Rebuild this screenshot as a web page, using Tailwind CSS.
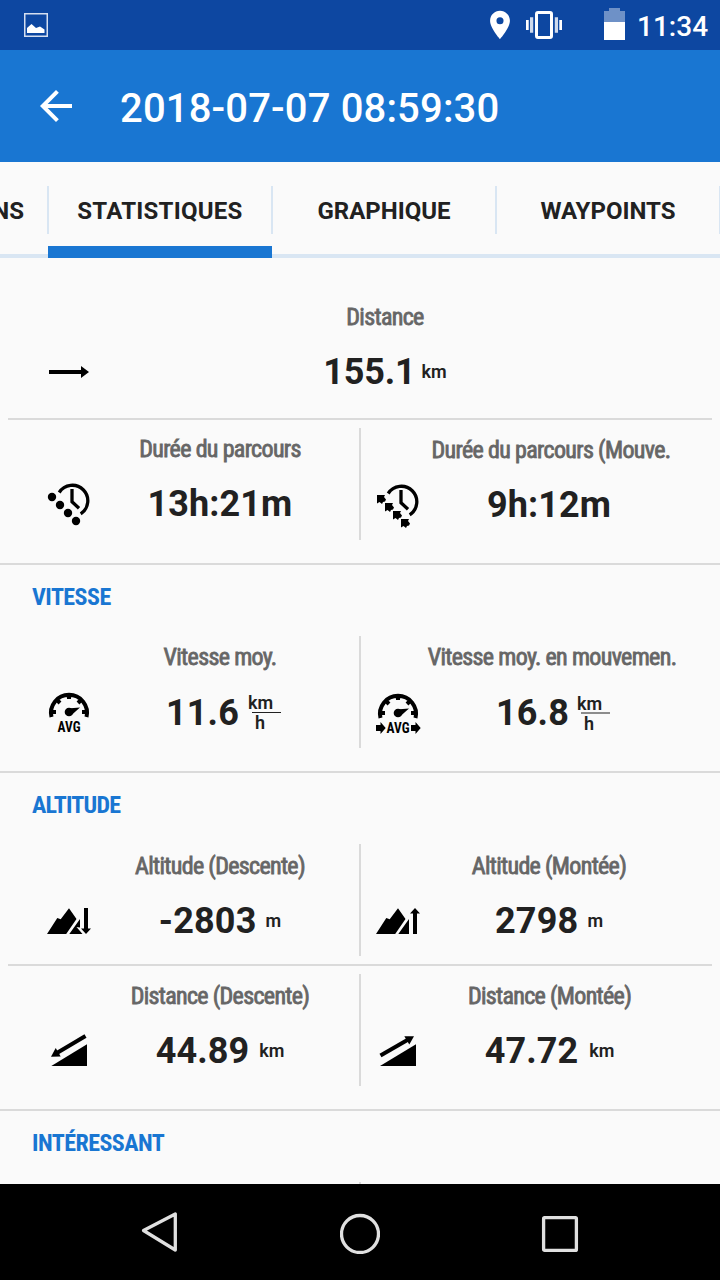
<!DOCTYPE html>
<html lang="fr">
<head>
<meta charset="utf-8">
<title>2018-07-07 08:59:30</title>
<script src="https://cdn.jsdelivr.net/npm/@tailwindcss/browser@4"></script>
</head>
<body class="w-[720px] h-[1280px] overflow-hidden bg-[#fafafa] font-['Roboto',sans-serif] text-[#212121] flex flex-col">

<!-- Status bar -->
<div class="h-[50px] shrink-0 bg-[#0d47a1] flex items-center text-white">
  <svg class="ml-6 w-6 h-6" viewBox="0 0 24 24"><rect x=".75" y=".75" width="22.5" height="22.5" fill="none" stroke="#d5dff0" stroke-width="1.5"/><path d="M3 20v-5l4.5-4 4.5 4 4-1.5 4.5 3V20z" fill="#fff"/></svg>
  <svg class="ml-[435px] w-[34px] h-[34px]" viewBox="0 0 24 24" fill="#fff"><path d="M12 2C8.13 2 5 5.13 5 9c0 5.25 7 13 7 13s7-7.750 7-13c0-3.870-3.130-7-7-7zm0 9.500a2.500 2.500 0 1 1 0-5 2.500 2.500 0 0 1 0 5z"/></svg>
  <svg class="ml-[9px] w-9 h-7" viewBox="0 0 36 28" fill="#fff"><rect x="10.500" y="1.500" width="15" height="25" rx="1.500" fill="none" stroke="#fff" stroke-width="3"/><path d="M0 9h2.700v10H0zM33.300 9H36v10h-2.700z"/><path fill="#cfdaec" d="M4 6.300h3.200v15.400H4zM28.800 6.300H32v15.400h-3.200z"/></svg>
  <svg class="ml-[42px] -mt-[2px] w-[21px] h-8" viewBox="0 0 21 32"><path fill="#6e91c7" d="M5 0h11v3h5v11H0V3h5z"/><path fill="#fff" d="M0 14h21v18H0z"/></svg>
  <span class="ml-[12px] mt-[3px] text-[28px] leading-8 font-medium">11:34</span>
</div>

<!-- App bar -->
<header class="h-[112px] shrink-0 bg-[#1976d2] flex items-center pl-8 text-white">
  <svg class="w-12 h-12" viewBox="0 0 24 24" fill="#fff"><path d="M20 11H7.830l5.590-5.590L12 4l-8 8 8 8 1.410-1.410L7.830 13H20v-2z"/></svg>
  <h1 class="ml-10 mt-[5px] text-[40px] leading-12 font-medium tracking-[0.150px]">2018-07-07 08:59:30</h1>
</header>

<!-- Tabs -->
<nav class="h-24 shrink-0 border-b-4 border-[#d9e6f3] flex text-[24px] leading-[34px] font-bold">
  <div class="w-12 h-24 flex justify-end overflow-hidden pr-6 pt-8 shrink-0"><span>NS</span></div>
  <div class="w-56 h-24 flex flex-col shrink-0 border-b-12 border-[#1976d2]">
    <div class="mt-6 h-12 -mx-px border-x-2 border-[#d9e6f3] text-center pt-2 tracking-[0.250px]">STATISTIQUES</div>
  </div>
  <div class="mt-6 h-12 w-56 shrink-0 pt-2 text-center">GRAPHIQUE</div>
  <div class="mt-6 h-12 w-[226px] shrink-0 -ml-px border-x-2 border-[#d9e6f3] pt-2 text-center">WAYPOINTS</div>
</nav>

<main class="flex-1 min-h-0 overflow-hidden">
  <!-- Distance -->
  <section class="h-[160px] pt-[37px]">
    <div class="flex">
      <svg class="ml-12 mt-[70px] w-[42px] h-3.5" viewBox="0 0 42 14"><path d="M1 5h32V1l8 6-8 6V9H1z"/></svg>
      <div class="w-[590px] text-center">
        <div class="mt-2 leading-7 text-[24px] font-['Roboto_Condensed'] tracking-[-0.660px] text-[#666] [-webkit-text-stroke:0.800px_#666]">Distance</div>
        <div class="mt-5 flex justify-center items-baseline leading-[42px]"><span class="text-[36px] font-bold tracking-[-0.150px]">155.1</span><span class="ml-[6px] relative -top-1.5 text-[18px] font-semibold">km</span></div>
      </div>
    </div>
  </section>
  <div class="h-0.5 mx-2 bg-[#dadada]"></div>

  <!-- Durations -->
  <section class="flex h-[143px] pt-2">
    <div class="w-[359px] h-28 flex pl-[46px]">
      <svg class="mt-[55px] w-[46px] h-[46px] overflow-visible" viewBox="0 0 46 46"><g transform="translate(1 0)"><path d="M12.200 9.500A15.500 15.500 0 1 1 33.700 30.800M25 6v12.700l7 6.600" fill="none" stroke="#000" stroke-width="3.300"/><circle cx="5" cy="14" r="4.200"/><circle cx="13" cy="22" r="4.200"/><circle cx="21" cy="30" r="4.200"/><circle cx="29" cy="38" r="4.200"/></g></svg>
      <div class="w-[256px] text-center">
        <div class="mt-[7px] leading-7 text-[24px] font-['Roboto_Condensed'] tracking-[-0.660px] text-[#666] [-webkit-text-stroke:0.800px_#666]">Durée du parcours</div>
        <div class="mt-5 leading-[42px] text-[36px] font-bold tracking-[0.100px]">13h:21m</div>
      </div>
    </div>
    <div class="w-0.5 h-28 bg-[#dadada]"></div>
    <div class="w-[359px] h-28 flex pl-[14px]">
      <svg class="mt-[55px] w-[46px] h-[46px] overflow-visible" viewBox="0 0 46 46"><g transform="translate(1 1)"><path d="M12.200 9.500A15.500 15.500 0 1 1 33.700 30.800M25 6v12.700l7 6.600" fill="none" stroke="#000" stroke-width="3.300"/><path d="M1 11h8l-1 2 2 2.500-1 2-2 .5-1 2-2.500-2-2.500 1.500zM9 19h8l-1 2 2 2.500-1 2-2 .5-1 2-2.500-2L9 27.500zM17 27h8l-1 2 2 2.500-1 2-2 .5-1 2-2.500-2-2.500 1.500zM25 35h8l-1 2 2 2.500-1 2-2 .5-1 2-2.500-2-2.500 1.500z"/></g></svg>
      <div class="w-[257px] text-center whitespace-nowrap">
        <div class="mt-2 pl-[3px] leading-7 text-[24px] font-['Roboto_Condensed'] tracking-[-0.660px] text-[#666] [-webkit-text-stroke:0.800px_#666]">Durée du parcours (Mouve.</div>
        <div class="mt-5 -ml-px leading-[42px] text-[36px] font-bold tracking-[0.100px]">9h:12m</div>
      </div>
    </div>
  </section>

  <!-- Speed -->
  <div class="h-0.5 bg-[#dadada]"></div>
  <h2 class="h-[71px] pl-8 pt-[18px] text-[24px] leading-7 font-bold font-['Roboto_Condensed'] tracking-[-0.550px] text-[#1976d2]">VITESSE</h2>
  <section class="flex h-[135px]">
    <div class="w-[359px] h-28 flex pl-[46px]">
      <svg class="mt-[55px] w-[46px] h-[46px] overflow-visible" viewBox="0 0 46 46"><g transform="translate(1 -1)"><path d="M4.500 27A18 18 0 1 1 39.500 27M4 22h5M35 22h5M22 4v5M9.500 9.500l3.500 3.500M34.500 9.500L31 13" fill="none" stroke="#000" stroke-width="4"/><circle cx="22" cy="22" r="4.300"/><path d="M20.500 18.500L33 17.500l-9 8z"/><text x="22" y="41.700" text-anchor="middle" textLength="23" lengthAdjust="spacingAndGlyphs" class="font-['Roboto_Condensed'] font-bold text-[14px]">AVG</text></g></svg>
      <div class="w-[256px] text-center">
        <div class="mt-[7px] leading-7 text-[24px] font-['Roboto_Condensed'] tracking-[-0.660px] text-[#666] [-webkit-text-stroke:0.800px_#666]">Vitesse moy.</div>
        <div class="mt-[21px] pl-[7px] flex justify-center text-left leading-[42px]"><span class="text-[36px] font-bold tracking-[0.200px]">11.6</span>
          <div class="ml-[9px] w-[33px] pt-px text-[18px] leading-5 font-semibold"><div class="h-[20px]">km</div><div class="h-px -mt-px ml-[4px] w-[29px] bg-[#212121]"></div><div class="pl-[7px]">h</div></div>
        </div>
      </div>
    </div>
    <div class="w-0.5 h-28 bg-[#dadada]"></div>
    <div class="w-[359px] h-28 flex pl-[14px]">
      <svg class="mt-[55px] w-[46px] h-[46px] overflow-visible" viewBox="0 0 46 46"><g transform="translate(1 0)"><path d="M4.500 27A18 18 0 1 1 39.500 27M4 22h5M35 22h5M22 4v5M9.500 9.500l3.500 3.500M34.500 9.500L31 13" fill="none" stroke="#000" stroke-width="4"/><circle cx="22" cy="22" r="4.300"/><path d="M20.500 18.500L33 17.500l-9 8z"/><path d="M0 34h4.500v-3l5.200 6-5.200 6v-3H0zM35 34h4.500v-3l5.200 6-5.200 6v-3H35z"/><text x="22" y="41.700" text-anchor="middle" textLength="23" lengthAdjust="spacingAndGlyphs" class="font-['Roboto_Condensed'] font-bold text-[14px]">AVG</text></g></svg>
      <div class="w-[262px] text-center whitespace-nowrap">
        <div class="mt-[7px] leading-7 text-[24px] font-['Roboto_Condensed'] tracking-[-0.660px] text-[#666] [-webkit-text-stroke:0.800px_#666]">Vitesse moy. en mouvemen.</div>
        <div class="mt-[21px] pl-[3px] flex justify-center text-left leading-[42px]"><span class="text-[36px] font-bold tracking-[0.200px]">16.8</span>
          <div class="ml-[8px] w-[34px] pt-0.5 text-[18px] leading-5 font-semibold"><div class="h-[20px]">km</div><div class="h-0.5 -mt-[2px] ml-[4px] w-[29px] bg-[#8c8c8c]"></div><div class="pl-[7px]">h</div></div>
        </div>
      </div>
    </div>
  </section>

  <!-- Elevation -->
  <div class="h-0.5 bg-[#dadada]"></div>
  <h2 class="h-[71px] pl-8 pt-[18px] text-[24px] leading-7 font-bold font-['Roboto_Condensed'] tracking-[-0.800px] text-[#1976d2]">ALTITUDE</h2>
  <section class="flex h-[120px]">
    <div class="w-[359px] h-28 flex pl-[46px]">
      <svg class="mt-[55px] w-[46px] h-[46px]" viewBox="0 0 46 46"><g transform="translate(0 8)"><path d="M1 27L11.300 11l3.400 1.300L23 1.300l7.500 10.700L20.200 27zM23.300 27L34 12v8.500l-3.500-.5L36.500 27zM38 1h4v20.500h3L40 27l-5-5.500h3z"/></g></svg>
      <div class="w-[256px] text-center">
        <div class="mt-2 leading-7 text-[24px] font-['Roboto_Condensed'] tracking-[-0.680px] text-[#666] [-webkit-text-stroke:0.800px_#666]">Altitude (Descente)</div>
        <div class="mt-5 flex justify-center items-baseline leading-[42px]"><span class="text-[36px] font-bold tracking-[0.200px]">-2803</span><span class="ml-[9px] relative -top-1.5 text-[18px] font-semibold">m</span></div>
      </div>
    </div>
    <div class="w-0.5 h-28 bg-[#dadada]"></div>
    <div class="w-[359px] h-28 flex pl-[14px]">
      <svg class="mt-[55px] w-[46px] h-[46px]" viewBox="0 0 46 46"><g transform="translate(0 8)"><path d="M1 27L11.300 11l3.400 1.300L23 1.300l7.500 10.700L20.200 27zM23.300 27L34 12v15zM38 27V6.500h-3L40 1l5 5.500h-3V27z"/></g></svg>
      <div class="w-[256px] text-center">
        <div class="mt-2 leading-7 text-[24px] font-['Roboto_Condensed'] tracking-[-0.680px] text-[#666] [-webkit-text-stroke:0.800px_#666]">Altitude (Montée)</div>
        <div class="mt-5 flex justify-center items-baseline leading-[42px]"><span class="text-[36px] font-bold tracking-[0.200px]">2798</span><span class="ml-[9px] relative -top-1.5 text-[18px] font-semibold">m</span></div>
      </div>
    </div>
  </section>
  <div class="h-0.5 mx-2 bg-[#dadada]"></div>
  <section class="flex h-[143px] pt-2">
    <div class="w-[359px] h-28 flex pl-[46px]">
      <svg class="mt-[55px] w-[46px] h-[46px]" viewBox="0 0 46 46"><g transform="translate(1 4)"><path d="M4.300 33L40 11.300V33z"/><path d="M38.500 3L9 20.500" stroke="#000" stroke-width="4"/><path d="M4 23.700L8.700 15l5 8.500z"/></g></svg>
      <div class="w-[256px] text-center">
        <div class="mt-2 leading-7 text-[24px] font-['Roboto_Condensed'] tracking-[-0.680px] text-[#666] [-webkit-text-stroke:0.800px_#666]">Distance (Descente)</div>
        <div class="mt-5 flex justify-center items-baseline leading-[42px]"><span class="text-[36px] font-bold tracking-[0.100px]">44.89</span><span class="ml-[10px] relative -top-1.5 text-[18px] font-semibold">km</span></div>
      </div>
    </div>
    <div class="w-0.5 h-28 bg-[#dadada]"></div>
    <div class="w-[359px] h-28 flex pl-[14px]">
      <svg class="mt-[55px] w-[46px] h-[46px]" viewBox="0 0 46 46"><g transform="translate(1 4)"><path d="M4 33L40 11.300V33z"/><path d="M4.500 22.500L34 5.500" stroke="#000" stroke-width="4"/><path d="M38 3.300l-4.700 8.200-5-8.200z"/></g></svg>
      <div class="w-[257px] text-center">
        <div class="mt-2 leading-7 text-[24px] font-['Roboto_Condensed'] tracking-[-0.680px] text-[#666] [-webkit-text-stroke:0.800px_#666]">Distance (Montée)</div>
        <div class="mt-5 flex justify-center items-baseline leading-[42px]"><span class="text-[36px] font-bold tracking-[0.100px]">47.72</span><span class="ml-[11px] relative -top-1.5 text-[18px] font-semibold">km</span></div>
      </div>
    </div>
  </section>

  <!-- Points of interest -->
  <div class="h-0.5 bg-[#dadada]"></div>
  <h2 class="h-[71px] pl-8 pt-[18px] text-[24px] leading-7 font-bold font-['Roboto_Condensed'] tracking-[-0.550px] text-[#1976d2]">INTÉRESSANT</h2>
  <div class="mx-auto w-0.5 h-28 bg-[#dadada]"></div>
</main>

<!-- System navigation -->
<footer class="h-24 shrink-0 bg-black flex justify-center items-center gap-[160px]">
  <svg class="w-10 h-11" viewBox="0 0 40 44" fill="none" stroke="#e0e0e0" stroke-width="3.300" stroke-linejoin="round"><path d="M35.300 4v36L3.500 20.500z"/></svg>
  <svg class="w-10 h-11" viewBox="0 0 40 44" fill="none" stroke="#e0e0e0" stroke-width="3.300"><circle cx="20" cy="24" r="18.500"/></svg>
  <svg class="w-10 h-11" viewBox="0 0 40 44" fill="none" stroke="#e0e0e0" stroke-width="3.300"><rect x="3.600" y="7.600" width="32.800" height="32.800" rx="1"/></svg>
</footer>
</body>
</html>
